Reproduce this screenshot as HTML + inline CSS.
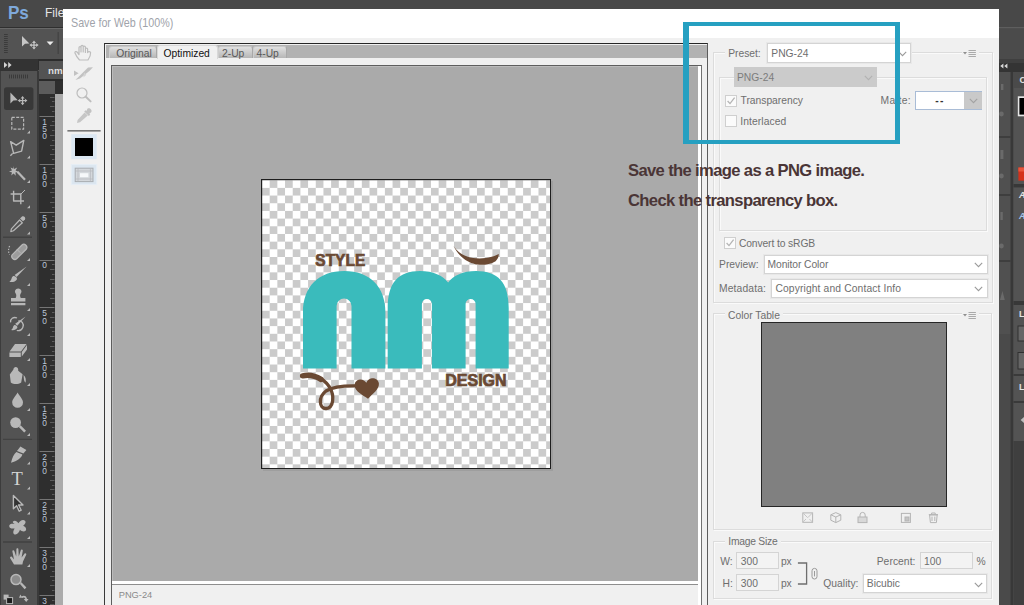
<!DOCTYPE html>
<html lang="en">
<head>
<meta charset="utf-8">
<title>Save for Web (100%)</title>
<style>
*{box-sizing:border-box;margin:0;padding:0}
html,body{width:1024px;height:605px;overflow:hidden;background:#535353;font-family:"Liberation Sans",sans-serif;}
.a{position:absolute}
#stage{position:absolute;left:0;top:0;width:1024px;height:605px;overflow:hidden;background:#535353}
/* ---------- photoshop chrome ---------- */
#menubar{left:0;top:0;width:1024px;height:27px;background:#484848}
#pslogo{left:7.500px;top:2px;font-size:19px;font-weight:bold;color:#7ea9db;letter-spacing:-.3px;line-height:22px;transform:scaleX(.9);transform-origin:0 0}
#mfile{left:45px;top:6px;font-size:12px;color:#e6e6e6;line-height:14px}
#optbar{left:0;top:27px;width:1024px;height:32px;background:#535353;border-top:1px solid #5e5e5e}
#darkstrip{left:0;top:59px;width:1024px;height:11px;background:#2c2c2c}
#tools{left:0;top:70px;width:37px;height:535px;background:#535353}
#ruler{left:38px;top:80px;width:17px;height:525px;background:#2e2e2e}
#canvasbg{left:55px;top:80px;width:9px;height:525px;background:#a9a9a9}
/* ---------- dialog ---------- */
#dlg{left:63px;top:8.500px;width:936px;height:600px;background:#f0f0f0}
#dlgtitle{left:0;top:0;width:936px;height:29px;background:#fff}
#dlgtitle span{position:absolute;left:8.400px;top:7.400px;font-size:12.200px;color:#a0a3aa;line-height:14px;white-space:nowrap;transform:scaleX(.88);transform-origin:0 0}
.t{position:absolute;font-size:10.3px;line-height:12px;color:#6e6e6e;white-space:nowrap}
.sel{position:absolute;background:#fff;border:1px solid #d4d4d4;box-shadow:0 0 0 1px #e8e8e8}
.cb{position:absolute;width:12px;height:12px;background:#fbfbfb;border:1px solid #cfcfcf}
.fs{position:absolute;border:1px solid #dcdcdc;box-shadow:1px 1px 0 #fafafa, inset 1px 1px 0 #fafafa}
.tab{position:absolute;background:linear-gradient(#e0e0e0,#b6b6b6);border:1px solid #a8a8a8;border-left-color:#cdcdcd;border-top-color:#c8c8c8;border-bottom:none;border-radius:3px 3px 0 0}
.tab span{position:absolute;top:1px;font-size:10.3px;line-height:12px;color:#585858;white-space:nowrap}
.tab.sel-tab{background:#f0f0f0;border-color:#d8d8d8}
.cap{position:absolute;font-weight:bold;font-size:16.6px;line-height:20px;color:#4a3536;white-space:nowrap;letter-spacing:-.64px}
</style>
</head>
<body>
<div id="stage">

<!-- ===== Photoshop chrome behind dialog ===== -->
<div id="menubar" class="a"></div>
<div id="pslogo" class="a">Ps</div>
<div id="mfile" class="a">File</div>
<div id="optbar" class="a"></div>
<div id="darkstrip" class="a"></div>
<div id="tools" class="a"></div>
<div id="ruler" class="a"></div>
<div id="canvasbg" class="a"></div>
<!-- options bar content -->
<svg class="a" style="left:0;top:27px" width="63" height="32" viewBox="0 27 63 32">
  <rect x="0" y="27" width="63" height="1" fill="#2f2f2f"/>
  <rect x="0" y="28" width="63" height="1" fill="#686868"/>
  <path d="M4,34.5H7.8M4,36.5H7.8M4,38.5H7.8M4,40.5H7.8M4,42.5H7.8M4,44.5H7.8M4,46.5H7.8M4,48.5H7.8M4,50.5H7.8M4,52.5H7.8" stroke="#3b3b3b" stroke-width="1"/>
  <path d="M22,36 V46.6 L25,43.8 L29.4,43.4 Z" fill="#c6c6c6"/>
  <path d="M34,40.6 l2,2.4 h-1.4 v1.4 h1.6 v-1.2 l2.4,1.9 l-2.4,1.9 v-1.2 h-1.6 v1.4 h1.4 l-2,2.4 l-2,-2.4 h1.4 v-1.4 h-1.6 v1.2 l-2.4,-1.9 l2.4,-1.9 v1.2 h1.6 v-1.4 h-1.4 z" fill="#c6c6c6"/>
  <path d="M46.6,41.6 h7 l-3.5,3.6 z" fill="#ececec"/>
  <rect x="57.6" y="32" width="1.2" height="22" fill="#434343"/>
</svg>
<!-- collapse strip + doc tab -->
<div class="a" style="left:0;top:59px;width:38px;height:12px;background:#333"></div>
<svg class="a" style="left:3px;top:61px" width="10" height="8" viewBox="0 0 10 8"><path d="M1,1 L4.4,4 L1,7 Z M5.2,1 L8.6,4 L5.2,7 Z" fill="#d2d2d2"/></svg>
<div class="a" style="left:39px;top:61px;width:30px;height:18px;background:#535353"></div>
<div class="a" style="left:48px;top:64.5px;font-size:9.800px;line-height:12px;font-weight:bold;color:#dcdcdc">nm</div>
<div class="a" style="left:38px;top:79px;width:26px;height:1.5px;background:#2a2a2a"></div>
<!-- tools panel -->
<div class="a" style="left:0;top:71px;width:1px;height:540px;background:#3c3c3c"></div>
<div class="a" style="left:37px;top:71px;width:2px;height:540px;background:#3a3a3a"></div>
<svg class="a" style="left:0;top:71px" width="38" height="534" viewBox="0 71 38 534">
  <path d="M9.5,74.6V78.4M11.5,74.6V78.4M13.5,74.6V78.4M15.5,74.6V78.4M17.5,74.6V78.4M19.5,74.6V78.4M21.5,74.6V78.4M23.5,74.6V78.4M25.5,74.6V78.4M27.5,74.6V78.4" stroke="#3a3a3a" stroke-width="1"/>
  <rect x="4" y="87.3" width="29.4" height="22.6" rx="2.5" fill="#383838"/>
  <g fill="#b8b8b8">
    <!-- move -->
    <path d="M10.4,92.6 V103.4 L13.4,100.6 L17.8,100.2 Z"/>
    <path d="M22.6,96 l2,2.4 h-1.4 v1.6 h1.8 v-1.3 l2.4,1.9 l-2.4,1.9 v-1.3 h-1.8 v1.6 h1.4 l-2,2.4 l-2,-2.4 h1.4 v-1.6 h-1.8 v1.3 l-2.4,-1.9 l2.4,-1.9 v1.3 h1.8 v-1.6 h-1.4 z"/>
    <path d="M27,133.5 h3 v-3 z"/><path d="M27,158.5 h3 v-3 z"/><path d="M27,183.1 h3 v-3 z"/><path d="M27,208.2 h3 v-3 z"/><path d="M27,234.5 h3 v-3 z"/><path d="M27,261.0 h3 v-3 z"/><path d="M27,286.1 h3 v-3 z"/><path d="M27,311.1 h3 v-3 z"/><path d="M27,336.1 h3 v-3 z"/><path d="M27,361.1 h3 v-3 z"/><path d="M27,386.1 h3 v-3 z"/><path d="M27,411.1 h3 v-3 z"/><path d="M27,436.1 h3 v-3 z"/><path d="M27,464.5 h3 v-3 z"/><path d="M27,489.5 h3 v-3 z"/><path d="M27,514.5 h3 v-3 z"/><path d="M27,539.1 h3 v-3 z"/>
    <!-- magic wand -->
    <path d="M13.2,166 l1,3 l3,-1.4 l-1.6,2.8 l2.8,1.4 l-3,.8 l.4,3.2 l-2.2,-2.2 l-2.4,2 l.8,-3 l-3,-1 l3,-1.2 l-1.4,-2.8 l2.8,1.2 z"/>
    <path d="M16.6,172.4 l1.6,-1.4 l7.6,8 l-1.6,1.6 z"/>
    <!-- eraser -->
    <path d="M15,344 h11.6 l-5.6,7.4 h-11.4 z M9.4,352.4 h11.4 v4.6 h-11.4 z M21.8,352 l5.2,-7 v4.6 l-5.2,7 z"/>
    <!-- bucket -->
    <path d="M13.4,369.6 c0,-3.4 4.8,-3.4 4.8,0 v1.2 l4.4,3.4 l-1.4,8.4 c-3,2 -7.6,2 -10.4,0 l-1,-8.2 z M23.6,375 c2,1.6 2.6,4.600 2,7.600 c-1.200,-.6 -1.800,-2.600 -2,-7.600 z"/>
    <!-- blur drop -->
    <path d="M17.600,392.600 c2.200,3.800 5.400,6.800 5.400,9.800 a5.400,5.400 0 0 1 -10.800,0 c0,-3 3.200,-6 5.400,-9.800 z"/>
    <!-- dodge -->
    <circle cx="15.600" cy="422.600" r="5.400"/>
    <path d="M18.800,427 l1.800,-1.800 l5.400,5.600 l-1.800,1.800 z"/>
    <!-- pen -->
    <path d="M20.400,446.600 l6,3.400 l-3,3.400 l-6.400,-2.400 z M16.400,452 l6,2.400 c-1,3.400 -5,6.400 -11.400,8.400 c1.400,-5.400 3,-9 5.400,-10.800 z"/>
    <!-- stamp -->
    <path d="M18.200,288.400 a3.200,3.200 0 0 1 2.400,5.400 c-.8,1.200 -.6,3 .2,4.200 h4.600 v3.600 h-14.400 v-3.600 h4.600 c.8,-1.200 1,-3 .2,-4.200 a3.200,3.200 0 0 1 2.400,-5.400 z M11,303 h14.400 v2.200 h-14.400 z"/>
    <!-- shape blob -->
    <path d="M13,521.600 c2,-2 4,0 5.400,1.600 c1.600,-2.600 4.600,-4.400 6.600,-2.400 c1.600,1.800 -.6,4 -1.800,5 c2.400,1 3.800,3.400 2.400,5 c-1.600,1.600 -4.400,.4 -5.600,-1 c-1,2.600 -3,5.400 -5.400,4.600 c-2.400,-1 -1,-4.400 0,-6 c-2.400,.6 -5.400,0 -5.400,-2.400 c0,-2.400 3.400,-2.400 5.400,-2 c-1,-.8 -2.400,-1.600 -1.600,-2.400 z"/>
    <!-- hand -->
    <path d="M14,564.600 L10.200,558.200 C9.600,557 11,556 12,557 L14,559.400 L12.400,551.600 C12.200,550.200 14,549.800 14.400,551.200 L16.200,556.600 L16.400,549.400 C16.400,548 18.400,548 18.400,549.400 L18.800,556.400 L20.800,550.200 C21.200,548.800 23,549.400 22.800,550.800 L21.600,557.400 L24.600,553.600 C25.400,552.600 26.800,553.600 26.200,554.800 L23,561.400 L22.400,564.600 Z"/>
    <path d="M27,566.900 h3 v-3 z"/>
    <!-- zoom -->
    <path d="M19.800,583.800 l1.600,-1.600 l5,5.200 l-1.800,1.800 z"/>
    <!-- fg/bg mini -->
    <rect x="3.600" y="594.600" width="5" height="5"/><rect x="6.600" y="597.600" width="6" height="6" fill="#1c1c1c" stroke="#b8b8b8" stroke-width="1"/>
    <path d="M21,597 c2.400,-2.400 5.600,-1.600 6,2 l1.600,0 l-2.400,3 l-2.400,-3 l1.600,0 c-.4,-1.600 -2,-2 -3,-1 z M20.400,594.600 l1.800,2.800 l-3.200,.4 z"/>
  </g>
  <g fill="none" stroke="#b8b8b8" stroke-linejoin="round">
    <!-- marquee -->
    <rect x="11.800" y="117.400" width="11.800" height="11.800" stroke-width="1.200" stroke-dasharray="3 1.400"/>
    <!-- lasso -->
    <path d="M10.600,141.600 l5.600,3.600 l7.600,-4.800 l-2.200,10.800 l-8,2.200 z M12.600,153.400 l-2.200,2.400" stroke-width="1.400"/>
    <!-- crop -->
    <path d="M13.600,190.800 v10.200 h10.400 M10.600,194 h10.200 v10.200" stroke-width="1.400"/><path d="M25,190 l-4.600,4.600" stroke-width="1"/>
    <!-- eyedropper -->
    <path d="M22,216.600 c1.600,-1.200 4,.8 3,2.800 l-2,1.800 l-3,-2.800 z" fill="#b8b8b8" stroke="none"/>
    <path d="M19.600,220 l2.800,2.800 l-9,8 l-2.600,.8 l.6,-2.800 z" stroke-width="1.200"/>
    <!-- healing -->
    <path d="M12.400,254.600 l9.600,-9.600 c2.400,-2.400 6.600,1.800 4.200,4.200 l-9.600,9.600 c-2.400,2.400 -6.600,-1.800 -4.200,-4.200 z" stroke-width="1.300" fill="#9c9c9c"/><path d="M17,249.400 l3.400,3.400 M18.600,251 h.1 M20.400,248.600 h.1 M16.400,253.200 h.1" stroke-width="1"/>
    <path d="M9.600,246 c-1.400,3 -1.400,6 0,8.600" stroke-width="1.200" stroke-dasharray="1.400 1.400"/>
    <!-- brush -->
    <path d="M26.600,266.600 l-10,10.400 l-2,-2 z" fill="#b8b8b8" stroke="none"/>
    <path d="M14,276 c2,.4 3,1.600 3,3.200 c-1.400,2.600 -5,3.400 -7.600,2.600 c1.800,-1.200 2,-2.600 2.400,-4 c.4,-1.200 1.200,-1.800 2.200,-1.800 z" fill="#b8b8b8" stroke="none"/>
    <!-- history brush -->
    <path d="M25.600,316.400 l-8.400,9.400 l-2,-2 z" fill="#b8b8b8" stroke="none"/>
    <path d="M15,325 c1.600,.4 2.400,1.400 2.400,2.800 c-1.200,2.200 -4,2.800 -6.200,2.200 c1.600,-1 1.600,-2.200 2,-3.400 c.3,-1 1,-1.600 1.800,-1.600 z" fill="#b8b8b8" stroke="none"/>
    <path d="M17,318 c-3.600,-1.600 -7,1 -6.400,4.400 M18.400,321 c3,-.6 6,2.400 4.400,6.400 c-1,2.400 -3.600,3.600 -6,3" stroke-width="1.300"/>
    <!-- zoom circle -->
    <circle cx="16" cy="579.600" r="5" stroke-width="1.500" fill="#8c8c8c"/>
    <!-- path select arrow -->
    <path d="M13.400,495.600 v13.200 l3.200,-3 l2.600,5.400 l2,-1 l-2.600,-5.200 h4.400 z" stroke-width="1.400" fill="#333"/>
  </g>
  <text x="11.500" y="485" font-family="Liberation Serif, serif" font-size="18.500" fill="#d4d4d4">T</text>
  <path d="M3,237.200 H32 M3,439.400 H32 M3,542 H32" stroke="#424242" stroke-width="1.400"/>
</svg>
<!-- rulers -->
<div class="a" style="left:39px;top:80.5px;width:15.500px;height:13px;background:#5c5c5c"></div>
<div class="a" style="left:54.500px;top:80.500px;width:9px;height:13px;background:#2e2e2e"></div>
<div class="a" style="left:39px;top:93.500px;width:15.500px;height:512px;background:#2e2e2e"></div>
<div class="a" style="left:54.500px;top:94px;width:9px;height:512px;background:#ababab"></div>
<svg class="a" style="left:38px;top:80px" width="26" height="525" viewBox="38 80 26 525">
  <path d="M39.500,116.5H54.500M39.500,164.5H54.500M39.500,212.5H54.500M39.500,260.5H54.500M39.500,307.5H54.500M39.500,355.5H54.500M39.500,403.5H54.500M39.500,451.5H54.500M39.500,499.5H54.500M39.500,547.5H54.500M39.500,595.5H54.500" stroke="#757575" stroke-width="1"/>
  <path d="M50,97.5H54.500M52,101.5H54.500M50,106.5H54.500M52,111.5H54.500M52,121.5H54.500M50,125.5H54.500M52,130.5H54.500M50,135.5H54.500M52,140.5H54.500M50,145.5H54.500M52,149.5H54.500M50,154.5H54.500M52,159.5H54.500M52,168.5H54.500M50,173.5H54.500M52,178.5H54.500M50,183.5H54.500M52,188.5H54.500M50,192.5H54.500M52,197.5H54.500M50,202.5H54.500M52,207.5H54.500M52,216.5H54.500M50,221.5H54.500M52,226.5H54.500M50,231.5H54.500M52,236.5H54.500M50,240.5H54.500M52,245.5H54.500M50,250.5H54.500M52,255.5H54.500M52,264.5H54.500M50,269.5H54.500M52,274.5H54.500M50,279.5H54.500M52,283.5H54.500M50,288.5H54.500M52,293.5H54.500M50,298.5H54.500M52,303.5H54.500M52,312.5H54.500M50,317.5H54.500M52,322.5H54.500M50,327.5H54.500M52,331.5H54.500M50,336.5H54.500M52,341.5H54.500M50,346.5H54.500M52,351.5H54.500M52,360.5H54.500M50,365.5H54.500M52,370.5H54.500M50,374.5H54.500M52,379.5H54.500M50,384.5H54.500M52,389.5H54.500M50,394.5H54.500M52,398.5H54.500M52,408.5H54.500M50,413.5H54.500M52,418.5H54.500M50,422.5H54.500M52,427.5H54.500M50,432.5H54.500M52,437.5H54.500M50,442.5H54.500M52,446.5H54.500M52,456.5H54.500M50,461.5H54.500M52,465.5H54.500M50,470.5H54.500M52,475.5H54.500M50,480.5H54.500M52,485.5H54.500M50,489.5H54.500M52,494.5H54.500M52,504.5H54.500M50,509.5H54.500M52,513.5H54.500M50,518.5H54.500M52,523.5H54.500M50,528.5H54.500M52,533.5H54.500M50,537.5H54.500M52,542.5H54.500M52,552.5H54.500M50,556.5H54.500M52,561.5H54.500M50,566.5H54.500M52,571.5H54.500M50,576.5H54.500M52,580.5H54.500M50,585.5H54.500M52,590.5H54.500M52,600.5H54.500M50,604.5H54.500" stroke="#5c5c5c" stroke-width="1"/>
  <g font-family="Liberation Sans, sans-serif" font-size="8.400" fill="#bcc6d8"><text x="42.300" y="124.7">1</text><text x="42.300" y="131.8">5</text><text x="42.300" y="138.9">0</text><text x="42.300" y="172.7">1</text><text x="42.300" y="179.8">0</text><text x="42.300" y="186.9">0</text><text x="42.300" y="220.6">5</text><text x="42.300" y="227.7">0</text><text x="42.300" y="268.4">0</text><text x="42.300" y="316.4">5</text><text x="42.300" y="323.5">0</text><text x="42.300" y="364.2">1</text><text x="42.300" y="371.3">0</text><text x="42.300" y="378.4">0</text><text x="42.300" y="412.0">1</text><text x="42.300" y="419.1">5</text><text x="42.300" y="426.2">0</text><text x="42.300" y="459.9">2</text><text x="42.300" y="467.0">0</text><text x="42.300" y="474.1">0</text><text x="42.300" y="507.9">2</text><text x="42.300" y="515.0">5</text><text x="42.300" y="522.1">0</text><text x="42.300" y="555.9">3</text><text x="42.300" y="563.0">0</text><text x="42.300" y="570.1">0</text><text x="42.300" y="603.9">3</text></g>
</svg>


<!-- right dock (partially visible) -->
<svg class="a" style="left:999px;top:27px" width="25" height="578" viewBox="999 27 25 578">
  <rect x="999" y="28.500" width="25" height="31" fill="#4b4b4b"/>
  <rect x="999" y="59" width="25" height="4" fill="#3f3f3f"/>
  <rect x="999" y="63" width="25" height="9" fill="#343434"/>
  <path d="M1003.400,63.400 V68.400 L1000.200,65.900 Z M1007.400,63.400 V68.400 L1004.200,65.900 Z" fill="#d6d6d6"/>
  <rect x="999" y="72" width="11.500" height="533" fill="#505050"/>
  <rect x="999" y="334" width="11.500" height="271" fill="#4a4a4a"/>
  <rect x="1010.500" y="72" width="3" height="533" fill="#383838"/>
  <rect x="1013.500" y="72" width="10.500" height="533" fill="#535353"/>
  <rect x="1013.500" y="72" width="10.500" height="16" fill="#4a4a4a"/>
  <path d="M999,137 h11.500 M999,195 h11.500 M999,261 h11.500" stroke="#383838" stroke-width="1.400"/>
  <g fill="#6a6a6a"><rect x="1001" y="84" width="2.400" height="6"/><circle cx="1001.400" cy="114" r="2.400"/><rect x="1000.400" y="150" width="3" height="9"/><circle cx="1001.400" cy="176" r="2.400"/><rect x="1000.400" y="212" width="2.400" height="8"/><circle cx="1001.400" cy="246" r="2.400"/><path d="M1000,300 l2.400,-9 l2.400,9 z"/></g>
  <rect x="1017.800" y="96.300" width="8" height="20" fill="#e6e6e6"/>
  <rect x="1019.400" y="98" width="6" height="16.600" fill="#000"/>
  <rect x="1018.400" y="167.500" width="6" height="13.200" fill="#d5301a"/>
  <rect x="1018.400" y="167.500" width="6" height="4" fill="#e8533a"/>
  <rect x="1013.500" y="184" width="10.500" height="3.400" fill="#383838"/>
  <rect x="1013.500" y="301" width="10.500" height="4" fill="#383838"/>
  <rect x="1018" y="326" width="7" height="15" fill="#666" stroke="#303030" stroke-width="1"/>
  <rect x="1018" y="352.500" width="7" height="16.500" fill="#666" stroke="#303030" stroke-width="1"/>
  <rect x="1013.500" y="374" width="10.500" height="2" fill="#3a3a3a"/>
  <rect x="1013.500" y="401" width="10.500" height="2" fill="#3a3a3a"/>
  <path d="M1024,417 v6 l-3.400,-3 z" fill="#bdbdbd"/>
  <rect x="1013.500" y="441" width="10.500" height="164" fill="#3f3f3f"/>
  <g font-family="Liberation Sans, sans-serif" font-weight="bold" font-size="9" fill="#e4e4e4">
    <text x="1019.600" y="83.400">C</text>
    <text x="1019" y="198.400" font-style="italic">A</text>
    <text x="1019" y="219" font-style="italic" fill="#a9c4ea">A</text>
    <text x="1019" y="317.400">L</text>
    <text x="1019" y="390.400">L</text>
  </g>
</svg>

<!-- ===== Save for Web dialog ===== -->
<div id="dlg" class="a">
  <div id="dlgtitle" class="a"><span>Save for Web (100%)</span></div>
</div>
<!-- dialog tool column -->
<svg class="a" style="left:63px;top:37px" width="42" height="160" viewBox="63 37 42 160">
  <g fill="none" stroke="#bdbdbd" stroke-width="1.2" stroke-linejoin="round" stroke-linecap="round">
    <!-- hand -->
    <path d="M79.5,60 C77,57.5 75.6,54.6 75,53 C74.6,51.6 76.4,51 77.4,52.4 L79,54.6 V47.6 C79,46.2 81,46.2 81,47.6 V52 V46.4 C81,45 83.2,45 83.2,46.4 V52 V47 C83.2,45.8 85.4,45.8 85.4,47 V52.4 V49 C85.4,47.8 87.6,47.8 87.6,49 V52.6 C87.6,51.4 90.4,51 90.6,52.6 C90.8,55.4 89.4,58 88,60 Z"/>
    <!-- zoom -->
    <circle cx="82" cy="93" r="5"/>
    <path d="M85.8,96.8 L90.6,101.4" stroke-width="2"/>
  </g>
  <!-- slice select -->
  <g fill="#c2c2c2">
    <path d="M74,70.4 L78.6,73.2 L74,76 Z"/>
    <path d="M75.4,80 L88,67.6 L93,67.2 L89.4,71 L80,78.4 Z"/>
    <path d="M84,72.6 L86.4,74.8 L83.4,77.4 Z" fill="#d4d4d4"/>
    <!-- eyedropper -->
    <path d="M87.6,108.6 C89.6,107.4 92.4,109.6 91.4,112 L89.4,113.8 L90.2,114.8 L88.8,116 L84.2,111.4 L85.6,110.2 L86.4,111 Z"/>
    <path d="M84.6,112.6 L87.8,115.6 L80,122.2 L77,123 L77.6,120 Z" fill="#c6c6c6"/>
  </g>
  <rect x="67.4" y="130.2" width="33.2" height="1.3" fill="#5a5a5a"/>
  <rect x="71.3" y="134.2" width="25.4" height="25" fill="#dbe7f2"/>
  <rect x="75" y="138" width="18" height="18" fill="#000"/>
  <rect x="71.3" y="164.6" width="25.4" height="20" fill="#dbe6f0" stroke="#e6eef6" stroke-width="1"/>
  <rect x="75.2" y="168.2" width="17.8" height="13.4" fill="#d4d8dc" stroke="#a9adb1" stroke-width="1"/>
  <path d="M75.2,171 H93 M78,168.2 V181.6 M90.4,168.2 V181.6 M75.2,179 H93" stroke="#b4b8bc" stroke-width=".7" fill="none"/>
  <rect x="80" y="173.2" width="8.4" height="4" fill="#f6f8fa"/>
</svg>

<!-- preview panel -->
<div class="a" style="left:104px;top:43px;width:603.700px;height:570px;background:#f0f0f0;border:1.500px solid #3a3a3a;border-top-color:#262626;border-right:1.700px solid #5c5c5c"></div>
<div class="a" style="left:106px;top:44.5px;width:601px;height:13.5px;background:#b2b2b2"></div>
<div class="tab" style="left:109px;top:46px;width:48px;height:12px"><span style="left:6.300px">Original</span></div>
<div class="tab sel-tab" style="left:157px;top:45px;width:61px;height:14px"><span style="left:5.500px;top:1.800px;color:#111">Optimized</span></div>
<div class="tab" style="left:218px;top:46px;width:34.500px;height:12px"><span style="left:3px">2-Up</span></div>
<div class="tab" style="left:252.500px;top:46px;width:34.500px;height:12px"><span style="left:3px">4-Up</span></div>
<!-- inner sunken frame -->
<div class="a" style="left:111px;top:65px;width:590.700px;height:545px;background:#fff;border:1.200px solid #727272;border-right-width:1.600px;border-left-color:#5e5e5e;border-top-color:#5e5e5e"></div>
<div class="a" style="left:112.200px;top:66.200px;width:585.600px;height:514.500px;background:#aaaaaa;box-shadow:inset 1px 1px 0 #bcbcbc"></div>
<!-- info strip -->
<div class="a" style="left:112.200px;top:583.800px;width:585.600px;height:26px;background:#f0f0f0;border-top:1px solid #8e8e8e"></div>
<div class="t" style="left:118.700px;top:589px;color:#8a8a8a;font-size:9.300px">PNG-24</div>
<div class="t" style="left:118.700px;top:601.500px;color:#8a8a8a;font-size:9.300px">7.293K</div>
<!-- image canvas with transparency checker and logo -->
<div class="a" style="left:262.500px;top:180.500px;width:290px;height:290px;background:rgba(0,0,0,.07)"></div>
<svg class="a" style="left:261px;top:179px" width="290" height="290" viewBox="261 179 290 290">
  <defs>
    <pattern id="chk" x="262" y="180.200" width="15.360" height="15.360" patternUnits="userSpaceOnUse">
      <rect x="0" y="0" width="15.360" height="15.360" fill="#fff"/>
      <rect x="7.680" y="0" width="7.680" height="7.680" fill="#cbcbcb"/>
      <rect x="0" y="7.680" width="7.680" height="7.680" fill="#cbcbcb"/>
    </pattern>
  </defs>
  <rect x="261" y="179" width="290" height="290" fill="#1e1e1e"/>
  <rect x="262.2" y="180.2" width="287.8" height="287.8" fill="url(#chk)"/>
  <!-- n -->
  <path fill="#3abbbc" d="M303,368.6 V312.2 C303,286.700 318.700,271 344.200,271 C369.700,271 385.400,286.700 385.400,312.200 V368.6 H351.5 V306 A7.4,7.4 0 0 0 336.6,306 V368.6 Z"/>
  <!-- m -->
  <path fill="#3abbbc" d="M387.7,368.6 V308 C387.700,282.500 398.500,271 420,271 C433,271 443,275.600 448.150,282.400 C453.300,275.600 463,271 476,271 C498,271 508.700,282.500 508.700,308 V368.6 H475.6 V304 a5,5 0 0 0 -10,0 V368.6 H431.9 V304 a5,5 0 0 0 -10,0 V368.6 Z"/>
  <text x="315.3" y="266" font-family="Liberation Sans, sans-serif" font-weight="bold" font-size="16.4" fill="#6a4933" stroke="#6a4933" stroke-width=".7" textLength="50" lengthAdjust="spacingAndGlyphs">STYLE</text>
  <text x="445.200" y="385.500" font-family="Liberation Sans, sans-serif" font-weight="bold" font-size="15.900" fill="#6a4933" stroke="#6a4933" stroke-width=".7" textLength="61.500" lengthAdjust="spacingAndGlyphs">DESIGN</text>
  <!-- swoosh -->
  <path fill="#fff" d="M450.700,248.500 C454,254 459,258.500 465,261 C468,262.300 471,263.100 474,263.400 L468,258 C462,256 457,252 453.500,246.100 Z"/>
  <path fill="#6a4933" d="M453.500,246.100 C457,251.500 462,255 467.800,256.800 C474,258.800 484,259 491.600,256.800 C494.500,255.900 497,254.900 498.700,253.900 C499.200,256.500 497.500,259.500 495.600,261.200 C491,264 485,265 479.700,264.800 C474,264.600 468,262 463.800,258.800 C459.500,255.500 456,251 453.500,246.100 Z"/>
  <!-- swirl + heart -->
  <path fill="none" stroke="#6a4933" stroke-width="3.300" stroke-linecap="round" d="M301.5,376 C310,373.5 322,376 329.5,387 C335,396 333.5,408 326,408.5 C319,408.5 318,397 326,391 C333,386.5 345,385.6 356,385.8"/>
  <path fill="none" stroke="#6a4933" stroke-width="5.400" stroke-linecap="round" d="M302.700,375.800 C308,374.600 315,375.600 321,379.400"/>
  <path fill="#6a4933" transform="rotate(-6 367 389)" d="M367,398.8 C362,394.5 355,390.5 355,384.8 C355,380.8 358,378.8 361,378.8 C363.6,378.8 365.8,380.4 367,382.6 C368.2,380.4 370.4,378.8 373,378.8 C376,378.8 379.4,380.8 379.4,384.8 C379.4,390.5 372,394.5 367,398.8 Z"/>
</svg>


<!-- right options panel -->
<div class="fs" style="left:713px;top:52px;width:280px;height:251px"></div>
<div class="fs" style="left:719px;top:77px;width:268px;height:154px"></div>
<div class="a" style="left:725px;top:46px;width:42px;height:14px;background:#f0f0f0"></div>
<div class="t" style="left:728.3px;top:47.8px;letter-spacing:-0.061px">Preset:</div>
<div class="sel" style="left:767px;top:43px;width:143.5px;height:19.5px"></div>
<div class="t" style="left:771.3px;top:47.8px;">PNG-24</div>
<svg class="a" style="left:898px;top:50.5px" width="9" height="6" viewBox="0 0 9 6"><path d="M0.8,0.8 L4.5,4.6 L8.2,0.8" fill="none" stroke="#9a9a9a" stroke-width="1.1"/></svg>
<svg class="a" style="left:962px;top:49.3px;background:#f0f0f0" width="17" height="8" viewBox="0 0 17 8"><path d="M1,3 h4 l-2,2.400 z" fill="#8e8e8e"/><path d="M6.500,1.500 h7.400 M6.500,3.500 h7.400 M6.500,5.500 h7.400 M6.500,7.500 h7.400" stroke="#a2a2a2" stroke-width=".9"/></svg>
<div class="a" style="left:733.5px;top:67px;width:143.7px;height:20px;background:#cbcbcb"></div>
<div class="t" style="left:737px;top:71.8px;color:#7c7c7c">PNG-24</div>
<svg class="a" style="left:864px;top:74.5px" width="9" height="6" viewBox="0 0 9 6"><path d="M0.8,0.8 L4.5,4.6 L8.2,0.8" fill="none" stroke="#b2b2b2" stroke-width="1.1"/></svg>
<div class="cb" style="left:725px;top:94.5px"><svg style="position:absolute;left:0;top:0" width="10" height="10" viewBox="0 0 10 10"><path d="M1.6,5 L4,7.6 L8.6,1.6" fill="none" stroke="#b4b4b4" stroke-width="1.3"/></svg></div>
<div class="t" style="left:740.5px;top:94.9px;letter-spacing:-0.007px">Transparency</div>
<div class="cb" style="left:725px;top:115px"></div>
<div class="t" style="left:740.3px;top:115.7px;letter-spacing:0.077px">Interlaced</div>
<div class="t" style="left:880.500px;top:95.200px;letter-spacing:.3px">Matte:</div>
<div class="a" style="left:915px;top:91.3px;width:67px;height:18.4px;background:#fff;border:1px solid #a9bcd6"></div>
<div class="a" style="left:964px;top:92px;width:17.5px;height:17px;background:#c9c9c9"></div>
<div class="t" style="left:935.300px;top:94.700px;color:#333;font-weight:bold;letter-spacing:1.200px">--</div>
<svg class="a" style="left:968.5px;top:98px" width="9" height="6" viewBox="0 0 9 6"><path d="M0.8,0.8 L4.5,4.6 L8.2,0.8" fill="none" stroke="#a2a2a2" stroke-width="1.1"/></svg>
<div class="cb" style="left:724.4px;top:237.3px"><svg style="position:absolute;left:0;top:0" width="10" height="10" viewBox="0 0 10 10"><path d="M1.6,5 L4,7.6 L8.6,1.6" fill="none" stroke="#b4b4b4" stroke-width="1.3"/></svg></div>
<div class="t" style="left:738.9px;top:238.1px;letter-spacing:-0.109px">Convert to sRGB</div>
<div class="t" style="left:719px;top:258.5px;letter-spacing:0.014px">Preview:</div>
<div class="sel" style="left:763.5px;top:254.7px;width:224px;height:19px"></div>
<div class="t" style="left:767.6px;top:258.5px;letter-spacing:-0.086px">Monitor Color</div>
<svg class="a" style="left:973.5px;top:262px" width="9" height="6" viewBox="0 0 9 6"><path d="M0.8,0.8 L4.5,4.6 L8.2,0.8" fill="none" stroke="#9a9a9a" stroke-width="1.1"/></svg>
<div class="t" style="left:719px;top:282.8px;letter-spacing:0.145px">Metadata<span>:</span></div>
<div class="sel" style="left:771px;top:278.7px;width:216.5px;height:19px"></div>
<div class="t" style="left:775.4px;top:282.8px;letter-spacing:0.127px">Copyright and Contact Info</div>
<svg class="a" style="left:973.5px;top:286px" width="9" height="6" viewBox="0 0 9 6"><path d="M0.8,0.8 L4.5,4.6 L8.2,0.8" fill="none" stroke="#9a9a9a" stroke-width="1.1"/></svg>
<div class="fs" style="left:713px;top:313.400px;width:279px;height:216.400px"></div>
<div class="a" style="left:725px;top:307px;width:58px;height:14px;background:#f0f0f0"></div>
<div class="t" style="left:728px;top:309.700px;letter-spacing:-0.001px">Color Table</div>
<svg class="a" style="left:962px;top:310.5px;background:#f0f0f0" width="17" height="8" viewBox="0 0 17 8"><path d="M1,3 h4 l-2,2.400 z" fill="#8e8e8e"/><path d="M6.500,1.500 h7.400 M6.500,3.500 h7.400 M6.500,5.500 h7.400 M6.500,7.500 h7.400" stroke="#a2a2a2" stroke-width=".9"/></svg>
<div class="a" style="left:760.5px;top:321.5px;width:186px;height:185.5px;background:#808080;border:1px solid #262626"></div>
<svg class="a" style="left:800px;top:510px" width="140" height="15" viewBox="800 510 140 15">
  <g fill="none" stroke="#b4b4b4" stroke-width="1">
    <rect x="802.800" y="512.900" width="9.800" height="9.400"/>
    <path d="M803,513 l4.600,4.600 M812.400,513 l-4.600,4.600 M803,522 l3,-3 M812.400,522 l-3,-3" stroke="#c6c6c6"/>
    <path d="M835.800,512.600 l5,2.200 v5.400 l-5,2.400 l-5,-2.400 v-5.400 z M830.800,514.800 l5,2.200 l5,-2.200 M835.800,517 v5.600"/>
    <rect x="858" y="517" width="9" height="5.600" fill="#d8d8d8"/>
    <path d="M860,517 v-2 a2.600,2.600 0 0 1 5.200,0 v2"/>
    <rect x="901.400" y="513.400" width="9" height="9"/>
    <rect x="905" y="517" width="4" height="4" fill="#c4c4c4"/>
    <path d="M929.600,515 h7.600 l-.8,7.600 h-6 z M928.800,514.600 h9.200 M931.600,514.400 v-1.400 h3.600 v1.400 M932,516.600 v4.400 M934.800,516.600 v4.400"/>
  </g>
</svg>
<div class="fs" style="left:713px;top:541px;width:279px;height:57.500px"></div>
<div class="a" style="left:725px;top:535px;width:56px;height:14px;background:#f0f0f0"></div>
<div class="t" style="left:728.3px;top:536.1px;letter-spacing:-0.242px">Image Size</div>
<div class="t" style="left:720.2px;top:556px;">W:</div>
<div class="a" style="left:736px;top:551.5px;width:42.5px;height:17.8px;background:#f3f3f3;border:1px solid #d4d4d4"></div>
<div class="t" style="left:740.7px;top:556px;">300</div>
<div class="t" style="left:780.9px;top:556px;">px</div>
<div class="t" style="left:722.5px;top:577.800px;">H:</div>
<div class="a" style="left:736px;top:573.5px;width:42.5px;height:17.8px;background:#f3f3f3;border:1px solid #d4d4d4"></div>
<div class="t" style="left:740.7px;top:577.800px;">300</div>
<div class="t" style="left:780.9px;top:577.800px;">px</div>
<svg class="a" style="left:796px;top:560px" width="26" height="28" viewBox="796 560 26 28"><path d="M797.9,563 H806.6 V584 H797.9" fill="none" stroke="#6e6e6e" stroke-width="1.3"/><rect x="812" y="568.4" width="5" height="10.6" rx="2.4" fill="none" stroke="#9a9a9a" stroke-width="1"/><path d="M814.5,571 v5.4" stroke="#9a9a9a" stroke-width="1"/></svg>
<div class="t" style="left:876.7px;top:556px;letter-spacing:0.055px">Percent:</div>
<div class="a" style="left:919.5px;top:551.5px;width:53px;height:17.8px;background:#f3f3f3;border:1px solid #d4d4d4"></div>
<div class="t" style="left:924px;top:556px;">100</div>
<div class="t" style="left:976.5px;top:556px;">%</div>
<div class="t" style="left:823.3px;top:578.300px;letter-spacing:0.035px">Quality:</div>
<div class="sel" style="left:862.500px;top:573.800px;width:124.500px;height:19.200px"></div>
<div class="t" style="left:866.800px;top:578.400px;">Bicubic</div>
<svg class="a" style="left:973.5px;top:581.5px" width="9" height="6" viewBox="0 0 9 6"><path d="M0.8,0.8 L4.5,4.6 L8.2,0.8" fill="none" stroke="#9a9a9a" stroke-width="1.1"/></svg>


<!-- tutorial overlay -->
<div class="a" style="left:682.600px;top:22px;width:217.600px;height:122px;border:4px solid #26a0c1;border-left-width:6px;border-right-width:5px"></div>
<div class="cap" style="left:628px;top:161px" id="cap1">Save the image as a PNG image.</div>
<div class="cap" style="left:628px;top:191.100px" id="cap2">Check the transparency box.</div>

</div>
</body>
</html>
